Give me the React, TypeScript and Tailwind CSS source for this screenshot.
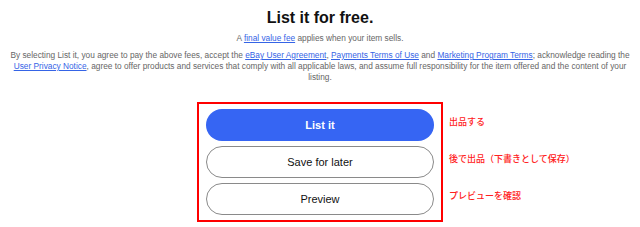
import React from "react";

const font = { fontFamily: '"Liberation Sans", Arial, sans-serif' };
const jp = { fontFamily: '"Noto Sans CJK JP", "Liberation Sans", sans-serif' };

function A({ children }: { children: React.ReactNode }) {
  return <a className="text-[#3564e6] underline underline-offset-1">{children}</a>;
}

export default function App() {
  return (
    <div className="w-[640px] h-[227px] bg-white flex flex-col items-center overflow-hidden" style={font}>
      <h1 className="mt-[8px] text-[16px] leading-[20px] font-bold text-[#111]">List it for free.</h1>
      <p className="mt-[4px] text-[8.3px] leading-[12px] text-[#666]">
        A <A>final value fee</A> applies when your item sells.
      </p>
      <p className="mt-[6px] px-[4px] text-center text-[8.3px] leading-[11px] text-[#666]">
        By selecting List it, you agree to pay the above fees, accept the <A>eBay User Agreement</A>,{" "}
        <A>Payments Terms of Use</A> and <A>Marketing Program Terms</A>; acknowledge reading the{" "}
        <A>User Privacy Notice</A>, agree to offer products and services that comply with all applicable laws, and
        assume full responsibility for the item offered and the content of your listing.
      </p>

      <div className="mt-[19px] w-full grid grid-cols-[1fr_auto_1fr]">
        <div />
        <div className="border-2 border-[#ff0000] w-[246px] px-[7px] py-[5px] flex flex-col gap-[5px]">
          <button className="h-[32px] rounded-full bg-[#3665f3] text-white text-[11px] font-bold">List it</button>
          <button className="h-[32px] rounded-full border border-[#8a8a8a] text-[#111] text-[11px]">
            Save for later
          </button>
          <button className="h-[32px] rounded-full border border-[#8a8a8a] text-[#111] text-[11px]">Preview</button>
        </div>
        <div className="pl-[6px] pt-[7px] flex flex-col gap-[5px] text-[9px] font-medium text-[#ff2020]" style={jp}>
          <div className="h-[32px] flex items-center -mt-[3px]">出品する</div>
          <div className="h-[32px] flex items-center">後で出品（下書きとして保存）</div>
          <div className="h-[32px] flex items-center">プレビューを確認</div>
        </div>
      </div>
    </div>
  );
}
